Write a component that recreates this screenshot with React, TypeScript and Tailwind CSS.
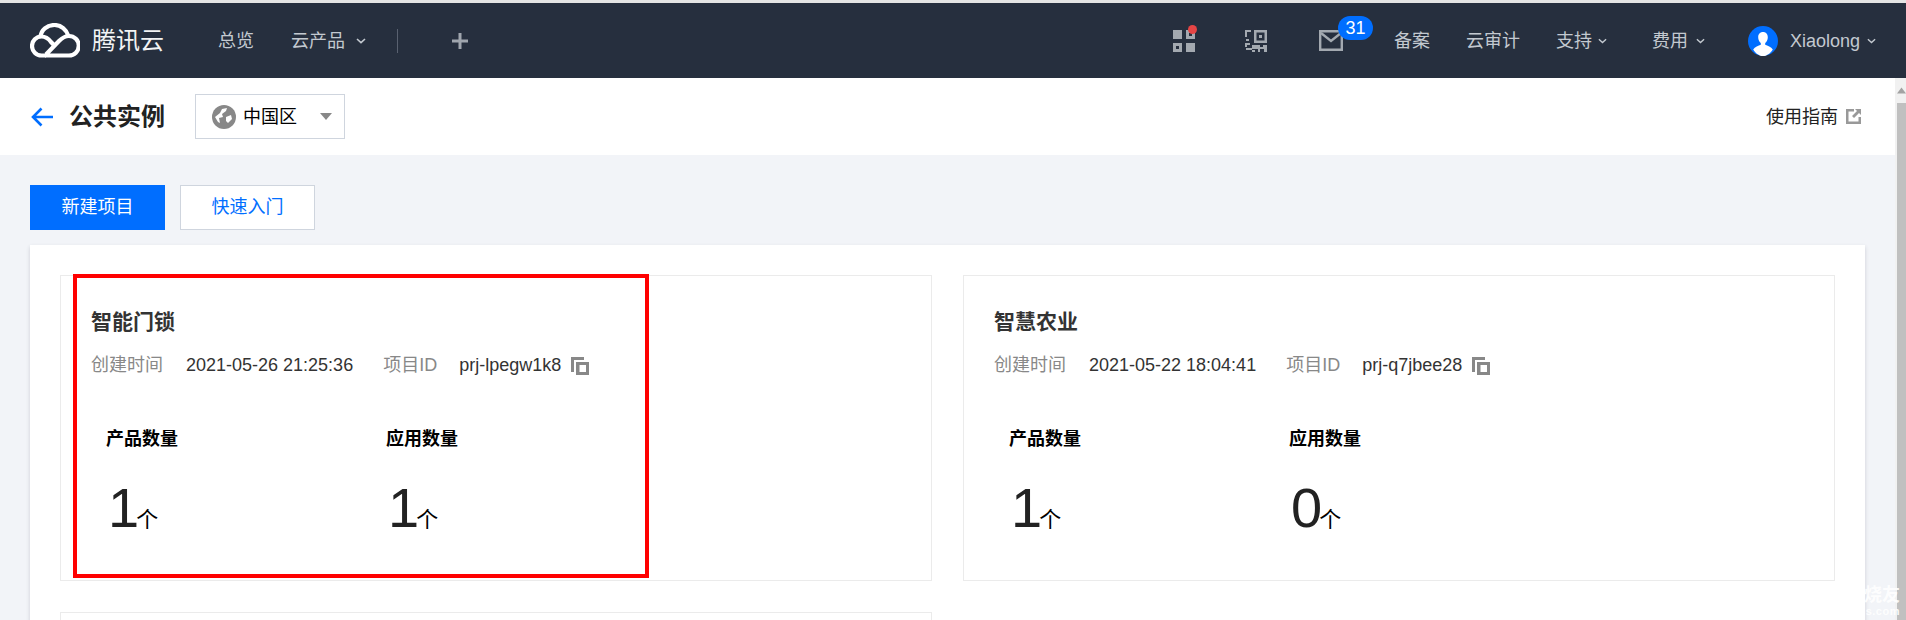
import React from "react";

const Chevron = ({ className }: { className: string }) => (
  <svg className={className} viewBox="0 0 10 6" fill="none" stroke="currentColor" strokeWidth="1.6">
    <path d="M1 1l4 3.6L9 1" />
  </svg>
);

const CopyIcon = () => (
  <svg className="w-[18px] h-[18px] ml-[10px] mt-[2px] text-[#888]" viewBox="0 0 18 18" fill="currentColor">
    <path d="M0 0h13v3H3v12H0z" />
    <path fillRule="evenodd" d="M5 5h13v13H5zM8.500 8v7H15V8z" />
  </svg>
);

const Logo = () => (
  <svg className="w-[50px] h-[36px]" viewBox="0 0 50 36" fill="none" stroke="#fff" strokeWidth="4.2">
    <path d="M10.500 14C11 7 17 2 24.500 2C31 2 36.500 6.500 38.500 13" />
    <path d="M15 32.500H39A9.700 9.700 0 0 0 39 13C35 13 32 15 29 18L16 31.500" />
    <path d="M25 23L21 19C18 15 15 13.500 11.500 13.500A9.500 9.500 0 0 0 11.500 32.500H16" />
  </svg>
);

const NavLink = ({ label, className }: { label: string; className: string }) => (
  <span className={`text-[18px] leading-none whitespace-nowrap ${className}`}>{label}</span>
);

const Stat = ({ label, value, className }: { label: string; value: number; className: string }) => (
  <div className={className}>
    <div className="text-[18px] leading-[26px] font-bold text-black">{label}</div>
    <div className="flex items-end mt-[24px] h-[64px] pl-[2px]">
      <span className="text-[56px] leading-[64px] text-[#222]">{value}</span>
      <span className="text-[22px] leading-[28px] text-black mb-[6px] -ml-[3px]">个</span>
    </div>
  </div>
);

type Project = { name: string; created: string; id: string; products: number; apps: number };

const ProjectCard = ({ project, boxed }: { project?: Project; boxed?: boolean }) => (
  <div className="relative h-[306px] border border-[#ebebeb] bg-white pl-[30px] pt-[31px]">
    {project && (
      <>
        <h3 className="text-[21px] leading-[30px] font-bold text-[#333]">{project.name}</h3>
        <div className="flex items-center mt-[14px] text-[18px] leading-[28px] text-[#333] whitespace-nowrap">
          <span className="text-[#888]">创建时间</span>
          <span className="ml-[23px]">{project.created}</span>
          <span className="ml-[30px] text-[#888]">项目ID</span>
          <span className="ml-[22px]">{project.id}</span>
          <CopyIcon />
        </div>
        <div className="flex mt-[47px] pl-[15px]">
          <Stat label="产品数量" value={project.products} className="w-[280px]" />
          <Stat label="应用数量" value={project.apps} className="w-[280px]" />
        </div>
      </>
    )}
    {boxed && (
      <div className="absolute left-[12px] -top-[2px] w-[576px] h-[304px] border-[4px] border-[#ff0000]" />
    )}
  </div>
);

export default function App() {
  return (
    <div
      className="relative w-[1906px] h-[620px] overflow-hidden bg-[#f2f4f8]"
      style={{ fontFamily: '"Liberation Sans", "Noto Sans CJK SC", sans-serif' }}
    >
      <div className="h-[3px] bg-[#e4e4e4]" />

      <header className="h-[75px] bg-[#262f3e] flex items-center text-[#c3c9d0]">
        <div className="ml-[30px]">
          <Logo />
        </div>
        <span className="ml-[12px] text-[24px] leading-none text-[#f2f3f4]">腾讯云</span>
        <NavLink label="总览" className="ml-[54px]" />
        <NavLink label="云产品" className="ml-[37px]" />
        <Chevron className="w-[10px] h-[6px] ml-[11px]" />
        <div className="w-px h-[24px] bg-[#596170] ml-[31px]" />
        <svg className="w-[16px] h-[16px] ml-[54px] text-[#a0a6ae]" viewBox="0 0 16 16" fill="currentColor">
          <path d="M6.500 0h3v6.500H16v3H9.500V16h-3V9.500H0v-3h6.500z" />
        </svg>

        <div className="ml-auto flex items-center">
          <div className="relative w-[22px] h-[22px]">
            <svg className="w-[22px] h-[22px] text-[#a3a9b0]" viewBox="0 0 22 22" fill="currentColor">
              <path d="M0 0h9v9H0z" />
              <path fillRule="evenodd" d="M13 0h9v9h-9zM16 3v3h3V3zM0 13h9v9H0zM3 16v3h3v-3z" />
              <path d="M13 13h9v9h-9z" />
            </svg>
            <span className="absolute -top-[5px] left-[15px] w-[9px] h-[9px] rounded-full bg-[#e54545]" />
          </div>
          <svg className="w-[22px] h-[22px] ml-[50px] text-[#a3a9b0]" viewBox="0 0 22 22" fill="currentColor">
            <path d="M0 0h6v2H2v5H0zM1 9h3v2H1zM0 13h5v2H2v2H0zM1 18h6v2h3v2H7v-2H1z" />
            <path fillRule="evenodd" d="M9 0h13v13H9zM11.500 2.500v8h8v-8zM14 5h3v3h-3z" />
            <path d="M7 15h8v2h3v-2h4v7h-3v-3h-4v3h-2v-3H7z" />
          </svg>
          <div className="relative ml-[52px] w-[24px] h-[21px]">
            <svg className="w-[24px] h-[21px] text-[#a3a9b0]" viewBox="0 0 24 21" fill="none" stroke="currentColor" strokeWidth="2.4">
              <path d="M1.200 1.200h21.600v18.600H1.200z" />
              <path d="M2 3l10 8 10-8" />
            </svg>
            <span className="absolute -top-[14px] left-[19px] w-[35px] h-[24px] rounded-[12px] bg-[#006eff] text-white text-[18px] leading-[24px] text-center">
              31
            </span>
          </div>
          <NavLink label="备案" className="ml-[51px]" />
          <NavLink label="云审计" className="ml-[36px]" />
          <NavLink label="支持" className="ml-[36px]" />
          <Chevron className="w-[9px] h-[6px] ml-[6px]" />
          <NavLink label="费用" className="ml-[45px]" />
          <Chevron className="w-[9px] h-[6px] ml-[8px]" />
          <svg className="w-[30px] h-[30px] ml-[43px]" viewBox="0 0 30 30">
            <circle cx="15" cy="15" r="15" fill="#006eff" />
            <path
              fill="#fff"
              d="M15 6c-3 0-4.800 2.200-4.800 5.200 0 2.300 1 4.500 2.600 5.800v1.800c-2.300 1.200-6 2-7.600 4.600C7.800 27.500 11.300 30 15 30s7.200-2.500 9.800-6.600c-1.600-2.600-5.300-3.400-7.600-4.600V17c1.600-1.300 2.600-3.500 2.600-5.800C19.800 8.200 18 6 15 6z"
            />
          </svg>
          <span className="ml-[12px] text-[18px] leading-none">Xiaolong</span>
          <Chevron className="w-[9px] h-[6px] ml-[7px] mr-[30px]" />
        </div>
      </header>

      <div className="flex h-[542px]">
        <main className="flex-1 min-w-0">
          <div className="h-[77px] bg-white flex items-center pl-[31px] pr-[34px]">
            <svg className="w-[22px] h-[20px] text-[#006eff]" viewBox="0 0 22 20" fill="none" stroke="currentColor" strokeWidth="2.600">
              <path d="M10.500 1.500L2 10l8.500 8.500M2.500 10H22" />
            </svg>
            <h1 className="ml-[16px] text-[24px] leading-none font-bold text-[#222]">公共实例</h1>
            <div className="ml-[30px] w-[150px] h-[45px] border border-[#cfd5de] flex items-center pl-[16px]">
              <svg className="w-[24px] h-[24px]" viewBox="0 0 24 24">
                <circle cx="12" cy="12" r="12" fill="#888" />
                <path fill="#fff" d="M3 12l5-4 2-4 5-1-1 3-4 3 1 3-4 1 1 5-2-1zM14 12l5-2 1 4-4 4-2-2z" />
              </svg>
              <span className="ml-[7px] text-[18px] leading-none text-black">中国区</span>
              <svg className="w-[12px] h-[7px] ml-[23px]" viewBox="0 0 12 7" fill="#888">
                <path d="M0 0h12L6 7z" />
              </svg>
            </div>
            <span className="ml-auto text-[18px] leading-none text-[#222]">使用指南</span>
            <svg className="w-[15px] h-[15px] ml-[8px] text-[#999]" viewBox="0 0 15 15" fill="currentColor">
              <path d="M0 0h8v2.500H2.500v10h10V8H15v7H0z" />
              <path d="M9 0h6v6l-2-2-5 5-2-2 5-5z" />
            </svg>
          </div>

          <div className="px-[30px] pt-[30px]">
            <div className="flex gap-[15px]">
              <button className="w-[135px] h-[45px] bg-[#006eff] text-white text-[18px]">新建项目</button>
              <button className="w-[135px] h-[45px] bg-white border border-[#cfd5de] text-[#006eff] text-[18px]">快速入门</button>
            </div>
            <div className="mt-[15px] bg-white shadow-[0_2px_4px_rgba(54,58,80,0.2)] p-[30px] grid grid-cols-2 gap-[31px]">
              <ProjectCard
                boxed
                project={{ name: "智能门锁", created: "2021-05-26 21:25:36", id: "prj-lpegw1k8", products: 1, apps: 1 }}
              />
              <ProjectCard
                project={{ name: "智慧农业", created: "2021-05-22 18:04:41", id: "prj-q7jbee28", products: 1, apps: 0 }}
              />
              <ProjectCard />
            </div>
          </div>
        </main>

        <div className="w-[11px] bg-[#f1f1f1] flex flex-col items-end">
          <svg className="w-[9px] h-[25px] py-[9px] text-[#a3a3a3]" viewBox="0 0 9 6" fill="currentColor">
            <path d="M4.500 0L9 6H0z" />
          </svg>
          <div className="w-[9px] flex-1 bg-[#c0c0c0]" />
        </div>
      </div>

      {/* watermark over the bottom right corner */}
      <div className="absolute right-[6px] top-[586px] text-right text-white opacity-90">
        <div className="text-[18px] leading-[19px] font-bold">电子发烧友</div>
        <div className="text-[11px] leading-[12px] font-bold tracking-[0.5px]">www.elecfans.com</div>
      </div>
    </div>
  );
}
